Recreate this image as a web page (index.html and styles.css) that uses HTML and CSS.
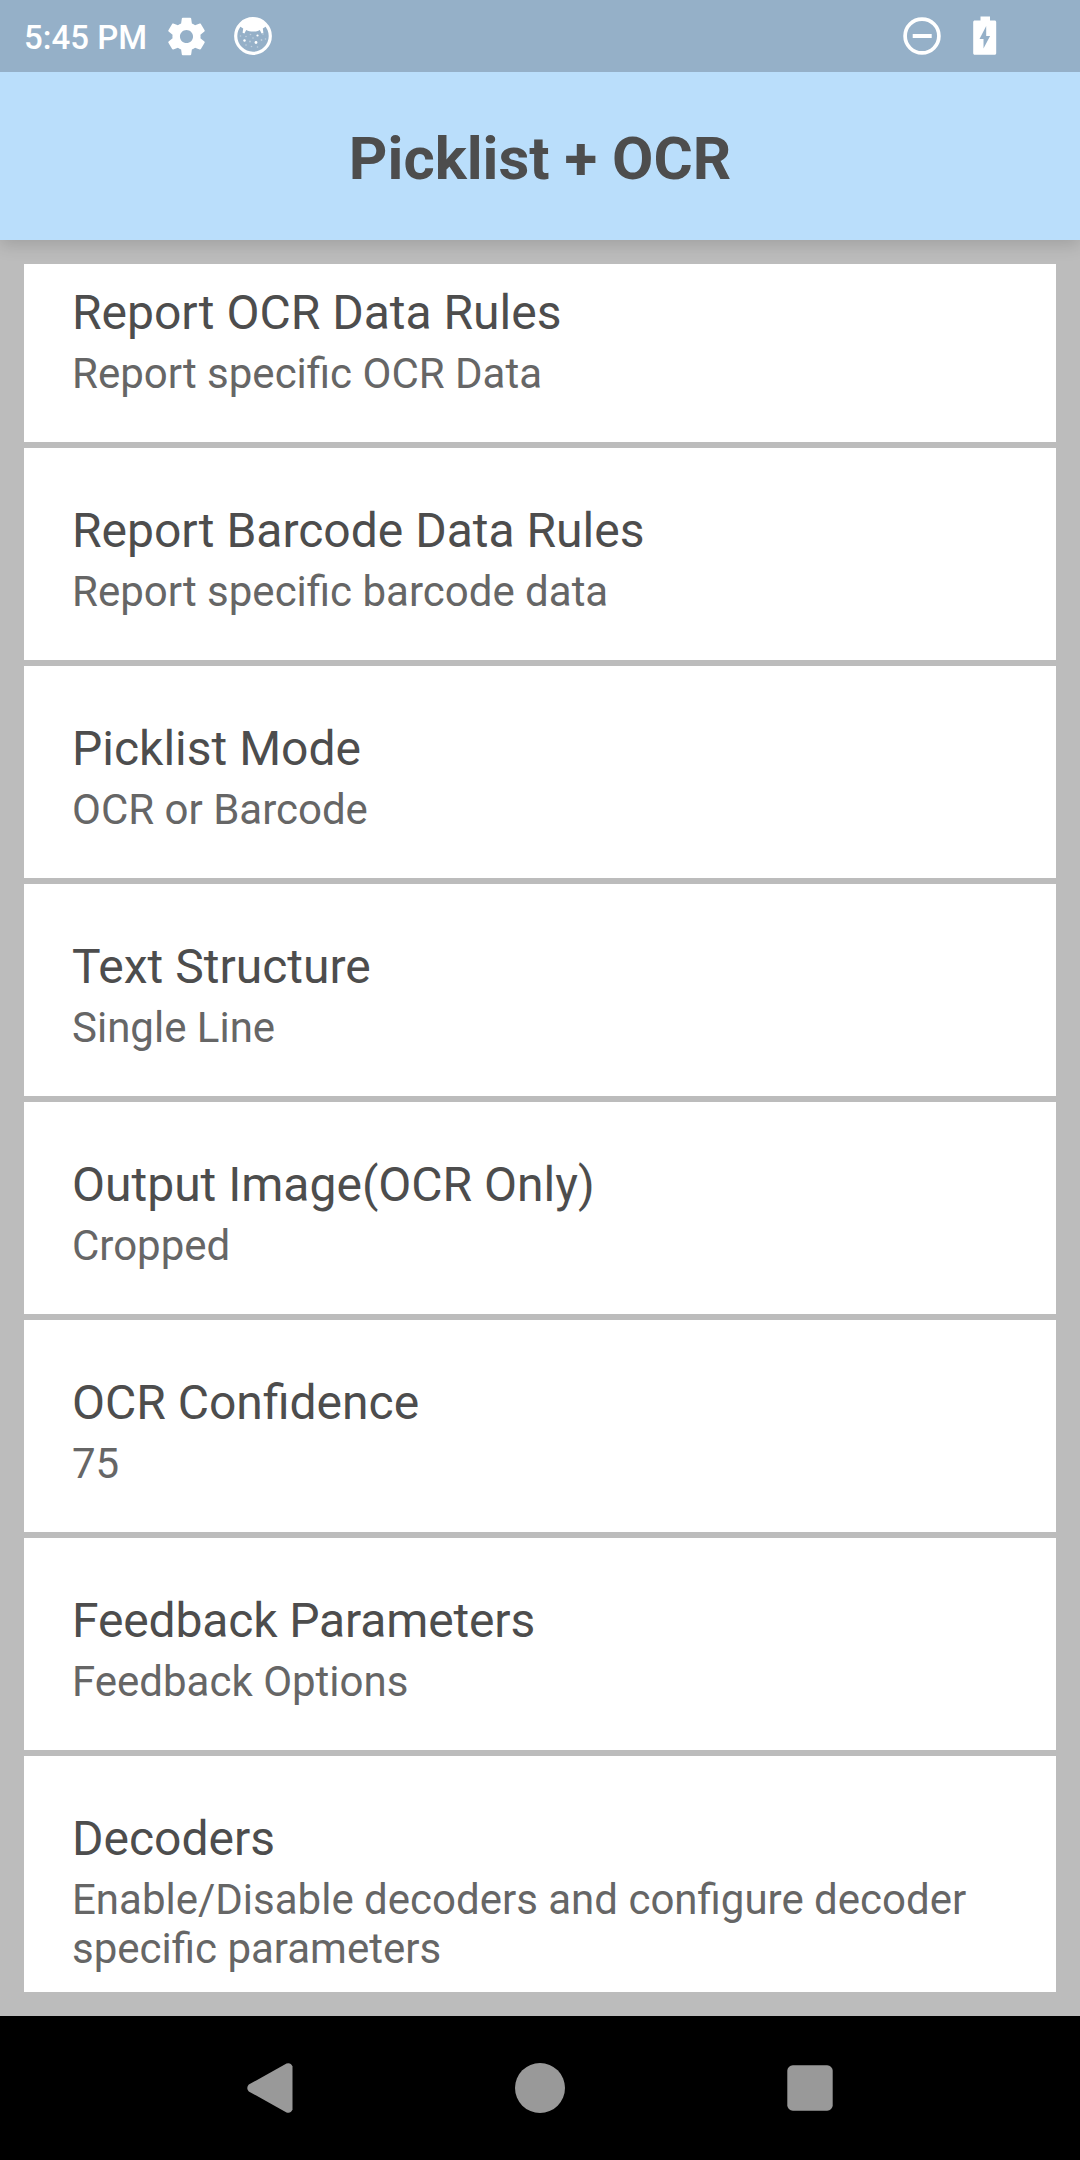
FILE: index.html
```html
<!DOCTYPE html>
<html lang="en">
<head>
<meta charset="utf-8">
<title>Picklist + OCR</title>
<link rel="stylesheet" href="styles.css">
</head>
<body>
<div class="screen">
  <div class="status-bar">
    <span class="clock">5:45 PM</span>
    <svg class="icon-gear" viewBox="0 0 24 24" width="45" height="45"><path d="M19.43 12.98c.04-.32.07-.64.07-.98s-.03-.66-.07-.98l2.11-1.65c.19-.15.24-.42.12-.64l-2-3.46c-.12-.22-.39-.3-.61-.22l-2.49 1c-.52-.4-1.08-.73-1.69-.98l-.38-2.65C14.46 2.18 14.25 2 14 2h-4c-.25 0-.46.18-.49.42l-.38 2.65c-.61.25-1.17.59-1.69.98l-2.49-1c-.23-.09-.49 0-.61.22l-2 3.46c-.13.22-.07.49.12.64l2.11 1.65c-.04.32-.07.65-.07.98s.03.66.07.98l-2.11 1.65c-.19.15-.24.42-.12.64l2 3.46c.12.22.39.3.61.22l2.49-1c.52.4 1.08.73 1.69.98l.38 2.65c.03.24.24.42.49.42h4c.25 0 .46-.18.49-.42l.38-2.65c.61-.25 1.17-.59 1.69-.98l2.49 1c.23.09.49 0 .61-.22l2-3.46c.12-.22.07-.49-.12-.64l-2.11-1.65zM12 15.5c-1.93 0-3.5-1.57-3.5-3.5s1.57-3.5 3.5-3.5 3.5 1.57 3.5 3.5-1.57 3.5-3.5 3.5z"/></svg>
    <svg class="icon-face" viewBox="0 0 40 40" width="40" height="40">
      <circle cx="20" cy="20" r="17.3" fill="none" stroke="#fff" stroke-width="3.2"/>
      <path d="M7 10.500C10 5.500 15.500 3 20 3s10 2.500 13 7.500l-3.200 2 .6 4.300-1.800.6-1.800-3.400C24.500 15.200 22.500 15.600 20 15.600s-4.500-.4-6.800-1.600l-1.800 3.400-1.800-.6 .6-4.300z"/>
      <circle cx="11.500" cy="24.500" r="1.200"/><circle cx="23" cy="26.500" r="1.400"/><circle cx="24.500" cy="19.500" r="1.100"/>
      <g opacity=".4"><circle cx="7.500" cy="20" r=".8"/><circle cx="13" cy="20.500" r=".8"/><circle cx="17.500" cy="18.500" r=".8"/><circle cx="20" cy="22" r=".8"/><circle cx="17" cy="25.500" r=".9"/><circle cx="28.500" cy="24" r=".9"/><circle cx="30" cy="18" r=".8"/><circle cx="13" cy="29" r=".8"/><circle cx="18.500" cy="30.500" r=".8"/><circle cx="24.500" cy="31" r=".8"/><circle cx="32.500" cy="23" r=".8"/></g>
    </svg>
    <span class="spacer"></span>
    <svg class="icon-dnd" viewBox="0 0 40 40" width="40" height="40"><circle cx="20" cy="20" r="16.900" fill="none" stroke="#fff" stroke-width="3.700"/><path d="M10.700 18h19v4h-19z"/></svg>
    <svg class="icon-battery" viewBox="0 0 24 40" width="24" height="40"><path fill-rule="evenodd" d="M7.500 0.500h9.500v4h4.700c.8 0 1.500.7 1.500 1.500v31.200c0 .8-.7 1.500-1.500 1.500h-20C.9 38.700.2 38 .2 37.200V6C.2 5.200.9 4.500 1.700 4.500h5.800zM13.200 10L6.500 23h4v9.500L17.100 20h-3.900z"/></svg>
  </div>
  <header class="app-bar"><h1>Picklist + OCR</h1></header>
  <main class="list">
    <div class="row row-scrolled"><div class="title">Report OCR Data Rules</div><div class="summary">Report specific OCR Data</div></div>
    <div class="row"><div class="title">Report Barcode Data Rules</div><div class="summary">Report specific barcode data</div></div>
    <div class="row"><div class="title">Picklist Mode</div><div class="summary">OCR or Barcode</div></div>
    <div class="row"><div class="title">Text Structure</div><div class="summary">Single Line</div></div>
    <div class="row"><div class="title">Output Image(OCR Only)</div><div class="summary">Cropped</div></div>
    <div class="row"><div class="title">OCR Confidence</div><div class="summary">75</div></div>
    <div class="row"><div class="title title-tight">Feedback Parameters</div><div class="summary">Feedback Options</div></div>
    <div class="row"><div class="title">Decoders</div><div class="summary">Enable/Disable decoders and configure decoder specific parameters</div></div>
  </main>
  <nav class="nav-bar">
    <svg viewBox="0 0 54 54" width="54" height="54"><path d="M5.800 23.600 43.500 2.600Q47.500 1 49.500 5.500V48.500Q47.500 53 43.500 51.400L5.800 30.400Q2.700 27 5.800 23.600z"/></svg>
    <svg viewBox="0 0 54 54" width="54" height="54"><circle cx="27" cy="27" r="25"/></svg>
    <svg viewBox="0 0 54 54" width="54" height="54"><rect x="4.300" y="4.300" width="45.400" height="45.400" rx="5.500"/></svg>
  </nav>
</div>
</body>
</html>
```
FILE: styles.css
```css
* { box-sizing: border-box; }

body {
  margin: 0;
  background: #bcbcbc;
  font-family: Roboto, "Liberation Sans", sans-serif;
}

.screen {
  width: 1080px;
  height: 2160px;
  display: flex;
  flex-direction: column;
  overflow: hidden;
}

.status-bar {
  flex: 0 0 72px;
  display: flex;
  align-items: center;
  padding: 0 83px 0 24px;
  background: #95b0c8;
  fill: #fff;
}

.clock {
  width: 123px;
  padding-top: 3px;
  color: #fff;
  font-size: 33px;
  font-weight: 500;
  line-height: 39px;
  white-space: nowrap;
}

.icon-gear { margin-left: 17px; }
.icon-face { margin-left: 24px; }
.spacer { flex: 1; }
.icon-dnd { margin-right: 31px; }

.app-bar {
  flex: 0 0 168px;
  display: flex;
  align-items: center;
  justify-content: center;
  padding-top: 5px;
  background: #badefb;
  box-shadow: 0 5px 16px rgba(0, 0, 0, 0.15);
  clip-path: inset(0 0 -30px 0);
}

h1 {
  margin: 0;
  color: #4d4d4d;
  font-size: 60px;
  font-weight: 700;
  line-height: 71px;
}

.list {
  flex: 1;
  min-height: 0;
  display: flex;
  flex-direction: column;
  gap: 6px;
  margin: 24px;
  overflow: hidden;
  position: relative;
}

.row {
  flex: none;
  min-height: 212px;
  padding: 54px 48px 44px;
  background: #fff;
}

.row-scrolled { margin-top: -34px; }

.title {
  color: #4d4d4d;
  font-size: 48px;
  line-height: 57px;
}

.title-tight { letter-spacing: -0.14px; }

.summary {
  margin-top: 8px;
  color: #666;
  font-size: 42px;
  line-height: 49px;
}

.nav-bar {
  flex: 0 0 144px;
  display: flex;
  align-items: center;
  justify-content: center;
  gap: 216px;
  background: #000;
  fill: #999;
}
```
